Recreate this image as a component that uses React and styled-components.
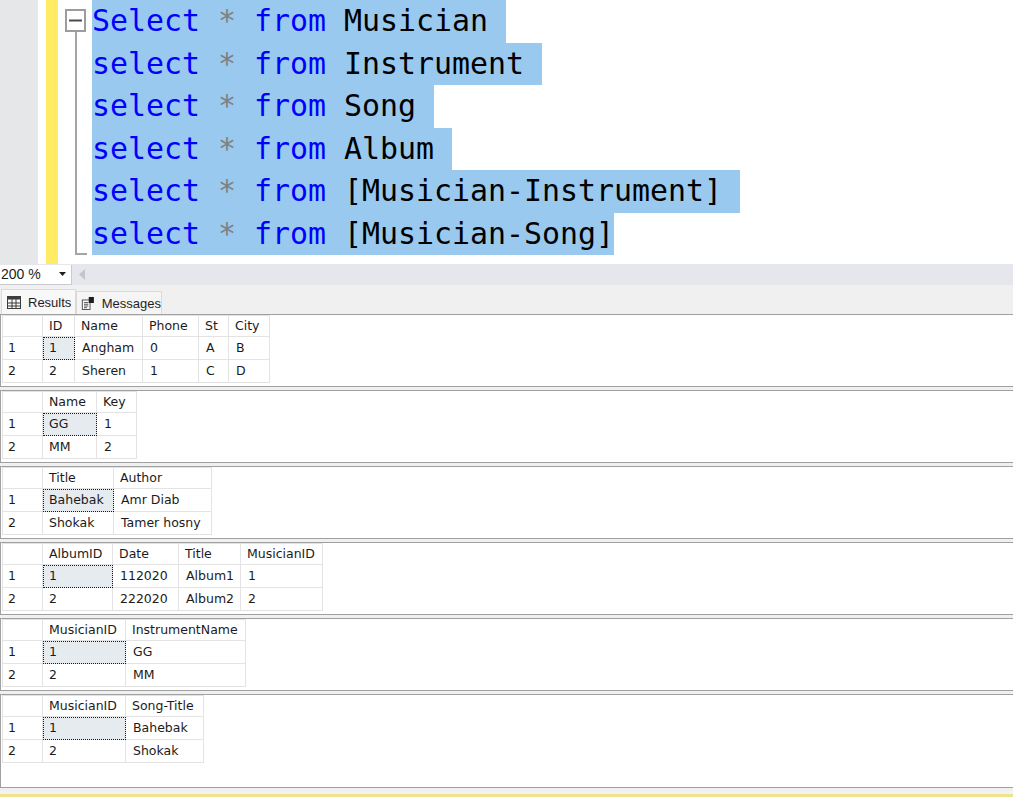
import React from "react";
import styled, { createGlobalStyle } from "styled-components";

const GlobalStyle = createGlobalStyle`
  html, body {
    margin: 0;
    padding: 0;
    background: #ffffff;
    overflow: hidden;
  }
`;

const Page = styled.div`
  width: 1013px;
  height: 797px;
  display: flex;
  flex-direction: column;
  font-family: "Liberation Sans", Arial, sans-serif;
`;

// ---------- editor ----------
const Editor = styled.div`
  display: flex;
  height: 264px;
  flex-shrink: 0;
  background: #ffffff;
`;

const Gutter = styled.div`
  width: 38px;
  background: #e6e7e9;
`;

const Gap = styled.div`
  width: ${(p) => p.w}px;
  background: #ffffff;
`;

const ChangeBar = styled.div`
  width: 12px;
  background: #ffec63;
`;

const FoldMargin = styled.svg`
  width: 34px;
  height: 264px;
  flex-shrink: 0;
`;

const Code = styled.div`
  display: flex;
  flex-direction: column;
  font-family: "DejaVu Sans Mono", "Liberation Mono", monospace;
  font-size: 29.9px;
  line-height: 42.5px;
`;

const Line = styled.div`
  height: 42.5px;
  white-space: pre;
`;

const Sel = styled.span`
  display: inline-block;
  height: 42.5px;
  background: #99c9ef;
`;

const Kw = styled.span`
  color: #0000ff;
`;

const Op = styled.span`
  color: #808080;
`;

const Id = styled.span`
  color: #000000;
`;

// ---------- zoom bar ----------
const ZoomBar = styled.div`
  display: flex;
  align-items: center;
  height: 21px;
  flex-shrink: 0;
  background: #e6e7ec;
`;

const ZoomBox = styled.div`
  display: flex;
  align-items: center;
  justify-content: space-between;
  box-sizing: border-box;
  width: 72px;
  height: 20px;
  padding: 0 5px 0 1px;
  background: #ffffff;
  border-right: 1px solid #c9cad2;
  border-bottom: 1px solid #c9cad2;
  font-size: 14px;
  color: #1e1e1e;
`;

const ScrollLeft = styled.svg`
  margin-left: 7px;
`;

// ---------- tabs ----------
const TabStrip = styled.div`
  display: flex;
  align-items: flex-end;
  height: 29px;
  flex-shrink: 0;
  padding-left: 1px;
  background: #f0f0f0;
`;

const Tab = styled.div`
  display: flex;
  align-items: center;
  gap: 7px;
  box-sizing: border-box;
  width: ${(p) => p.w}px;
  height: ${(p) => (p.active ? 25 : 23)}px;
  padding-left: ${(p) => (p.active ? 5 : 4)}px;
  background: ${(p) => (p.active ? "#f8f8f8" : "#f5f5f5")};
  border: 1px solid #dadada;
  border-bottom: none;
  font-size: 13px;
  color: #1e1e1e;
`;

// ---------- results ----------
const Results = styled.div`
  flex: 1;
  display: flex;
  flex-direction: column;
  gap: 3px;
  background: #f0f0f0;
`;

const Panel = styled.div`
  box-sizing: border-box;
  height: ${(p) => p.h}px;
  flex-shrink: 0;
  padding-left: 1px;
  background: #ffffff;
  border-top: 1px solid #a0a0a0;
  border-bottom: 1px solid #a0a0a0;
  border-left: 1px solid #a0a0a0;
`;

const Grid = styled.div`
  display: grid;
  grid-template-columns: ${(p) => p.cols};
  width: max-content;
  border-top: 1px solid #e3e3e3;
  border-left: 1px solid #e3e3e3;
`;

const Cell = styled.div`
  box-sizing: border-box;
  height: ${(p) => (p.head ? 21 : 23)}px;
  padding-left: ${(p) => (p.pad != null ? p.pad : 6)}px;
  line-height: ${(p) => (p.head ? 20 : 22)}px;
  border-right: 1px solid #e3e3e3;
  border-bottom: 1px solid #e3e3e3;
  background: ${(p) => (p.selected ? "#e6ebf0" : "#ffffff")};
  outline: ${(p) => (p.selected ? "1px dotted #1a1a1a" : "none")};
  outline-offset: -1px;
  font-family: "DejaVu Sans", "Liberation Sans", sans-serif;
  font-size: 12.5px;
  color: #1b1b1b;
  white-space: nowrap;
  overflow: hidden;
`;

const Footer = styled.div`
  flex: 1;
  background: #f3f3f3;
  border-bottom: 3px solid #efe48c;
`;

const codeLines = [
  { kw: "Select", name: "Musician", tail: " " },
  { kw: "select", name: "Instrument", tail: " " },
  { kw: "select", name: "Song", tail: " " },
  { kw: "select", name: "Album", tail: " " },
  { kw: "select", name: "[Musician-Instrument]", tail: " " },
  { kw: "select", name: "[Musician-Song]", tail: "" },
];

const tables = [
  {
    cols: [40, 32, 68, 56, 30, 41],
    head: ["ID", "Name", "Phone", "St", "City"],
    rows: [
      ["1", "Angham", "0", "A", "B"],
      ["2", "Sheren", "1", "C", "D"],
    ],
  },
  {
    cols: [40, 54, 40],
    head: ["Name", "Key"],
    rows: [
      ["GG", "1"],
      ["MM", "2"],
    ],
  },
  {
    cols: [40, 71, 98],
    head: ["Title", "Author"],
    rows: [
      ["Bahebak", "Amr Diab"],
      ["Shokak", "Tamer hosny"],
    ],
  },
  {
    cols: [40, 70, 66, 62, 82],
    head: ["AlbumID", "Date", "Title", "MusicianID"],
    rows: [
      ["1", "112020", "Album1", "1"],
      ["2", "222020", "Album2", "2"],
    ],
  },
  {
    cols: [40, 83, 120],
    head: ["MusicianID", "InstrumentName"],
    rows: [
      ["1", "GG"],
      ["2", "MM"],
    ],
  },
  {
    cols: [40, 83, 78],
    head: ["MusicianID", "Song-Title"],
    rows: [
      ["1", "Bahebak"],
      ["2", "Shokak"],
    ],
    h: 94,
  },
];

function GridIcon() {
  return (
    <svg width="14" height="13" viewBox="0 0 14 13">
      <rect x="0.5" y="0.5" width="13" height="12" fill="none" stroke="#3c3c3c" />
      <rect x="0.5" y="0.5" width="13" height="3" fill="#3c3c3c" />
      <line x1="0.5" y1="7" x2="13.5" y2="7" stroke="#3c3c3c" />
      <line x1="0.5" y1="10" x2="13.5" y2="10" stroke="#3c3c3c" />
      <line x1="5" y1="0.5" x2="5" y2="12.5" stroke="#3c3c3c" />
      <line x1="9" y1="0.5" x2="9" y2="12.5" stroke="#3c3c3c" />
    </svg>
  );
}

function MessagesIcon() {
  return (
    <svg width="16" height="16" viewBox="0 0 16 16">
      <rect x="1.5" y="4.5" width="9" height="11" fill="#ffffff" stroke="#3c3c3c" />
      <line x1="3.5" y1="7.5" x2="8.5" y2="7.5" stroke="#3c3c3c" />
      <line x1="3.5" y1="9.5" x2="8.5" y2="9.5" stroke="#3c3c3c" />
      <line x1="3.5" y1="11.5" x2="8.5" y2="11.5" stroke="#3c3c3c" />
      <line x1="3.5" y1="13.5" x2="7" y2="13.5" stroke="#3c3c3c" />
      <rect x="9" y="1" width="6" height="7" fill="#1e1e1e" />
    </svg>
  );
}

function ResultGrid({ cols, head, rows }) {
  return (
    <Grid cols={cols.map((c) => c + "px").join(" ")}>
      <Cell head />
      {head.map((h) => (
        <Cell head key={h}>
          {h}
        </Cell>
      ))}
      {rows.map((r, i) => (
        <React.Fragment key={i}>
          <Cell pad={5}>{i + 1}</Cell>
          {r.map((v, j) => (
            <Cell key={j} pad={j === 0 ? 6 : 7} selected={i === 0 && j === 0}>
              {v}
            </Cell>
          ))}
        </React.Fragment>
      ))}
    </Grid>
  );
}

export default function App() {
  return (
    <Page>
      <GlobalStyle />
      <Editor>
        <Gutter />
        <Gap w={8} />
        <ChangeBar />
        <FoldMargin viewBox="0 0 34 264">
          <line x1="18" y1="32" x2="18" y2="255" stroke="#a5a5a5" strokeWidth="2" />
          <line x1="18" y1="254" x2="29" y2="254" stroke="#a5a5a5" strokeWidth="2" />
          <rect x="8" y="10" width="19" height="21" fill="#ffffff" stroke="#9c9c9c" strokeWidth="2" />
          <line x1="11" y1="20.5" x2="24" y2="20.5" stroke="#4a4a4a" strokeWidth="2" />
        </FoldMargin>
        <Code>
          {codeLines.map((l, i) => (
            <Line key={i}>
              <Sel>
                <Kw>{l.kw}</Kw> <Op>*</Op> <Kw>from</Kw> <Id>{l.name}</Id>
                {l.tail}
              </Sel>
            </Line>
          ))}
        </Code>
      </Editor>

      <ZoomBar>
        <ZoomBox>
          <span>200 %</span>
          <svg width="7" height="4" viewBox="0 0 7 4">
            <path d="M0 0 L7 0 L3.5 4 Z" fill="#1e1e1e" />
          </svg>
        </ZoomBox>
        <ScrollLeft width="6" height="11" viewBox="0 0 6 11">
          <path d="M6 0 L0 5.5 L6 11 Z" fill="#c4c5cb" />
        </ScrollLeft>
      </ZoomBar>

      <TabStrip>
        <Tab active w={75}>
          <GridIcon />
          Results
        </Tab>
        <Tab w={86}>
          <MessagesIcon />
          Messages
        </Tab>
      </TabStrip>

      <Results>
        {tables.map((t, i) => (
          <Panel key={i} h={t.h || 73}>
            <ResultGrid cols={t.cols} head={t.head} rows={t.rows} />
          </Panel>
        ))}
        <Footer />
      </Results>
    </Page>
  );
}
